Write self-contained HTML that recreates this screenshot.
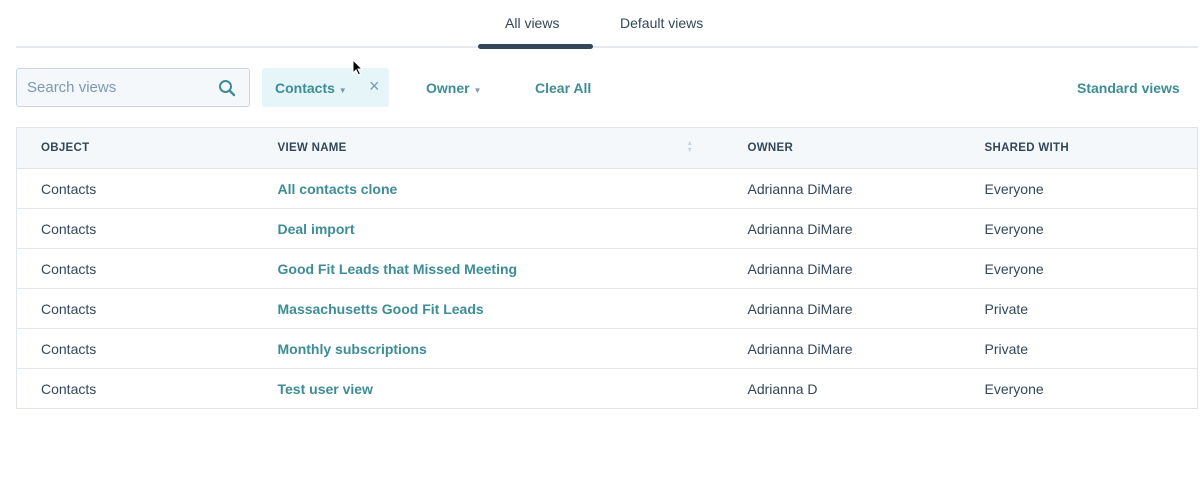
<!DOCTYPE html>
<html><head><meta charset="utf-8"><style>
*{box-sizing:border-box;margin:0;padding:0}
body{width:1200px;height:494px;background:#fff;font-family:"Liberation Sans",sans-serif;color:#33475b;position:relative;overflow:hidden}
.abs{position:absolute}
.tab{font-size:14px;top:15px}
.link{color:#3d8d97;font-weight:bold;font-size:14px}
table{position:absolute;left:16px;top:127px;width:1182px;border-collapse:collapse;border:1px solid #dfe3eb}
th{background:#f5f8fa;height:41px;text-align:left;font-size:11.5px;letter-spacing:.3px;color:#33475b;border-bottom:1px solid #dfe3eb}
td{height:40px;font-size:14px;border-top:1px solid #e5e8ed}
th,td{padding-left:24px}
td a{color:#3d8d97;font-weight:bold;text-decoration:none}
</style></head><body>
<div class="abs tab" style="left:505px;font-weight:500">All views</div>
<div class="abs tab" style="left:620px">Default views</div>
<div class="abs" style="left:16px;top:46px;width:1182px;height:2px;background:#e5e8ed"></div>
<div class="abs" style="left:478px;top:44px;width:115px;height:5px;border-radius:3px;background:#33475b"></div>
<div class="abs" style="left:16px;top:68px;width:234px;height:39px;border:1px solid #cbd6e2;border-radius:3px;background:#f5f8fa"></div>
<div class="abs" style="left:27px;top:79px;font-size:15px;color:#7c98b6">Search views</div>
<svg class="abs" style="left:218px;top:79px" width="18" height="18" viewBox="0 0 18 18"><circle cx="7.5" cy="7.5" r="5.5" fill="none" stroke="#3d8d97" stroke-width="2"/><path d="M11.5 11.5 L16 16" stroke="#3d8d97" stroke-width="2.4" stroke-linecap="round"/></svg>
<div class="abs" style="left:262px;top:68px;width:127px;height:39px;border-radius:3px;background:#e5f5f8"></div>
<div class="abs link" style="left:275px;top:80px">Contacts <span style="font-size:8px;color:#7c98b6">▼</span></div>
<div class="abs" style="left:369px;top:76px;font-size:18px;color:#7c98b6">×</div>
<div class="abs link" style="left:426px;top:80px">Owner <span style="font-size:8px;color:#7c98b6">▼</span></div>
<div class="abs link" style="left:535px;top:80px">Clear All</div>
<div class="abs link" style="left:1077px;top:80px">Standard views</div>
<table>
<tr><th style="width:237px">OBJECT</th><th style="width:470px;position:relative">VIEW NAME<span style="position:absolute;right:30px;top:12px;font-size:7px;color:#cbd6e2;line-height:7px">▲<br>▼</span></th><th style="width:237px">OWNER</th><th>SHARED WITH</th></tr>
<tr><td>Contacts</td><td><a>All contacts clone</a></td><td>Adrianna DiMare</td><td>Everyone</td></tr>
<tr><td>Contacts</td><td><a>Deal import</a></td><td>Adrianna DiMare</td><td>Everyone</td></tr>
<tr><td>Contacts</td><td><a>Good Fit Leads that Missed Meeting</a></td><td>Adrianna DiMare</td><td>Everyone</td></tr>
<tr><td>Contacts</td><td><a>Massachusetts Good Fit Leads</a></td><td>Adrianna DiMare</td><td>Private</td></tr>
<tr><td>Contacts</td><td><a>Monthly subscriptions</a></td><td>Adrianna DiMare</td><td>Private</td></tr>
<tr><td>Contacts</td><td><a>Test user view</a></td><td>Adrianna D</td><td>Everyone</td></tr>
</table>
<svg class="abs" style="left:352px;top:59px" width="12" height="18" viewBox="0 0 12 18"><path d="M1 1 L1 14 L4 11 L6.5 16 L8.5 15 L6 10 L10 10 Z" fill="#000" stroke="#fff" stroke-width="1"/></svg>
</body></html>
